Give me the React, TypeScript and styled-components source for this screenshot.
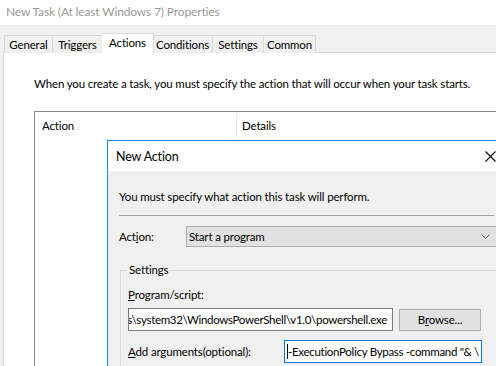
import React from 'react'
import styled, { createGlobalStyle } from 'styled-components'

const GlobalStyle = createGlobalStyle`
  html, body {
    margin: 0;
    padding: 0;
    overflow: hidden;
  }
  body {
    font-family: Lato, 'Noto Sans', sans-serif;
    font-size: 11.5px;
    letter-spacing: -0.15px;
    color: #000;
  }
  * {
    box-sizing: border-box;
  }
`

const tabs = [
  { label: 'General', width: 49 },
  { label: 'Triggers', width: 50 },
  { label: 'Actions', width: 52 },
  { label: 'Conditions', width: 60 },
  { label: 'Settings', width: 51 },
  { label: 'Common', width: 52 },
]

export default function App() {
  return (
    <Window>
      <GlobalStyle />
      <TitleBar>New Task (At least Windows 7) Properties</TitleBar>

      <TabStrip>
        {tabs.map((t) => (
          <Tab key={t.label} $width={t.width} $active={t.label === 'Actions'}>
            {t.label}
          </Tab>
        ))}
      </TabStrip>

      <Panel>
        <Intro>When you create a task, you must specify the action that will occur when your task starts.</Intro>
        <ListView>
          <ListHeader>
            <HeaderCell $width={202}>Action</HeaderCell>
            <HeaderCell>Details</HeaderCell>
          </ListHeader>
        </ListView>
      </Panel>

      <Dialog>
        <DialogTitle>
          <span>New Action</span>
          <CloseButton>
            <svg width="11" height="11" viewBox="0 0 11 11">
              <path d="M0.5 0.5 L10.5 10.5 M10.5 0.5 L0.5 10.5" stroke="#000" strokeWidth="1.1" fill="none" />
            </svg>
          </CloseButton>
        </DialogTitle>

        <DialogBody>
          <Hint>You must specify what action this task will perform.</Hint>
          <Separator />

          <ActionRow>
            <FieldLabel $width={67}>
              Act<u>i</u>on:
            </FieldLabel>
            <Dropdown>
              <span>Start a program</span>
              <svg width="9" height="6" viewBox="0 0 9 6">
                <path d="M0.5 0.5 L4.5 4.5 L8.5 0.5" stroke="#5a5a5a" strokeWidth="1" fill="none" />
              </svg>
            </Dropdown>
          </ActionRow>

          <GroupBox>
            <GroupLegend>Settings</GroupLegend>
            <FieldCaption>
              <u>P</u>rogram/script:
            </FieldCaption>
            <InputRow>
              <TextBox $width={265} $alignEnd $tight>
                <span>C:\Windows\system32\WindowsPowerShell\v1.0\powershell.exe</span>
              </TextBox>
              <PushButton>
                B<u>r</u>owse...
              </PushButton>
            </InputRow>
            <ArgsRow>
              <FieldLabel $width={156}>
                <u>A</u>dd arguments(optional):
              </FieldLabel>
              <TextBox $width={198} $focused $tight>
                <Caret />
                <span>-ExecutionPolicy Bypass -command "&amp; \</span>
              </TextBox>
            </ArgsRow>
          </GroupBox>
        </DialogBody>
      </Dialog>
    </Window>
  )
}

const Window = styled.div`
  position: relative;
  width: 496px;
  height: 366px;
  overflow: hidden;
  background: #f0f0f0;
  display: flex;
  flex-direction: column;
`

const TitleBar = styled.div`
  height: 25px;
  flex: none;
  background: #fff;
  color: #9a9a9a;
  font-size: 12px;
  padding-left: 6px;
  line-height: 23px;
  white-space: nowrap;
`

const TabStrip = styled.div`
  height: 28px;
  flex: none;
  display: flex;
  align-items: flex-end;
  padding-left: 4px;
`

const Tab = styled.div<{ $active?: boolean; $width: number }>`
  width: ${(p) => p.$width}px;
  height: ${(p) => (p.$active ? 20 : 18)}px;
  margin: 0 ${(p) => (p.$active ? -1 : 0)}px;
  position: relative;
  z-index: ${(p) => (p.$active ? 1 : 0)};
  background: ${(p) => (p.$active ? '#fff' : '#f0f0f0')};
  border: 1px solid #d9d9d9;
  border-bottom: none;
  & + & {
    border-left: ${(p) => (p.$active ? '1px solid #d9d9d9' : 'none')};
  }
  line-height: ${(p) => (p.$active ? 18 : 17)}px;
  text-align: center;
  white-space: nowrap;
`

const Panel = styled.div`
  flex: 1;
  margin-left: 3px;
  margin-top: -1px;
  background: #fff;
  border-top: 1px solid #d9d9d9;
  border-left: 1px solid #d9d9d9;
  padding: 23px 0 0 30px;
`

const Intro = styled.div`
  line-height: 16px;
  white-space: nowrap;
`

const ListView = styled.div`
  margin-top: 19px;
  height: 300px;
  border-top: 1px solid #828790;
  border-left: 1px solid #828790;
`

const ListHeader = styled.div`
  display: flex;
  height: 26px;
  align-items: center;
`

const HeaderCell = styled.div<{ $width?: number }>`
  ${(p) => (p.$width ? `width: ${p.$width}px;` : 'flex: 1;')}
  padding-left: ${(p) => (p.$width ? 7 : 5)}px;
  height: 23px;
  line-height: 23px;
  border-right: ${(p) => (p.$width ? '1px solid #e5e5e5' : 'none')};
  white-space: nowrap;
`

const Dialog = styled.div`
  position: absolute;
  left: 107px;
  top: 140px;
  width: 400px;
  height: 260px;
  border: 1px solid #1883d7;
  background: #f0f0f0;
  display: flex;
  flex-direction: column;
`

const DialogTitle = styled.div`
  height: 30px;
  flex: none;
  background: #fff;
  display: flex;
  align-items: center;
  padding-left: 8px;
  font-size: 12.5px;
  position: relative;
`

const CloseButton = styled.div`
  position: absolute;
  left: 377px;
  top: 10px;
  width: 11px;
  height: 11px;
  display: flex;
`

const DialogBody = styled.div`
  flex: 1;
  padding: 18px 0 0 11px;
`

const Hint = styled.div`
  line-height: 16px;
  white-space: nowrap;
`

const Separator = styled.div`
  margin-top: 10px;
  width: 375px;
  height: 1px;
  background: #a0a0a0;
`

const ActionRow = styled.div`
  display: flex;
  align-items: center;
  margin-top: 10px;
  height: 21px;
`

const FieldLabel = styled.div<{ $width: number }>`
  width: ${(p) => p.$width}px;
  flex: none;
  white-space: nowrap;
`

const Dropdown = styled.div`
  width: 311px;
  height: 21px;
  flex: none;
  background: #e1e1e1;
  border: 1px solid #adadad;
  display: flex;
  align-items: center;
  justify-content: space-between;
  padding: 0 6px 0 2px;
  white-space: nowrap;
`

const GroupBox = styled.div`
  position: relative;
  margin-top: 23px;
  margin-left: 1px;
  height: 120px;
  border-top: 1px solid #dcdcdc;
  border-left: 1px solid #dcdcdc;
  padding: 16px 0 0 7px;
`

const GroupLegend = styled.span`
  position: absolute;
  left: 6px;
  top: -9px;
  padding: 0 2px;
  background: #f0f0f0;
  line-height: 16px;
`

const FieldCaption = styled.div`
  line-height: 16px;
  white-space: nowrap;
`

const InputRow = styled.div`
  display: flex;
  align-items: flex-start;
  gap: 6px;
  margin-top: 5px;
`

const TextBox = styled.div<{ $width: number; $focused?: boolean; $alignEnd?: boolean; $tight?: boolean }>`
  width: ${(p) => p.$width}px;
  height: 23px;
  flex: none;
  background: #fff;
  border: 1px solid ${(p) => (p.$focused ? '#0078d7' : '#7a7a7a')};
  padding: 0 ${(p) => (p.$alignEnd ? 5 : 2)}px 0 2px;
  line-height: 21px;
  letter-spacing: ${(p) => (p.$tight ? -0.3 : -0.15)}px;
  white-space: nowrap;
  overflow: hidden;
  display: flex;
  align-items: center;
  justify-content: ${(p) => (p.$alignEnd ? 'flex-end' : 'flex-start')};
  & > span {
    flex: none;
  }
`

const Caret = styled.span`
  width: 1px;
  height: 15px;
  background: #000;
  flex: none;
`

const PushButton = styled.div`
  width: 82px;
  height: 22px;
  margin-top: 1px;
  background: #e1e1e1;
  border: 1px solid #adadad;
  text-align: center;
  line-height: 20px;
  white-space: nowrap;
`

const ArgsRow = styled.div`
  display: flex;
  align-items: center;
  margin-top: 9px;
`
